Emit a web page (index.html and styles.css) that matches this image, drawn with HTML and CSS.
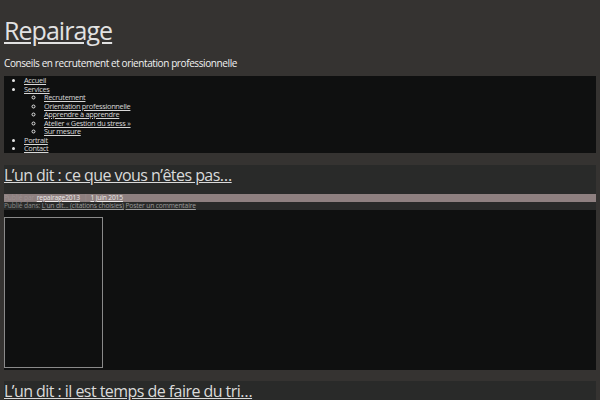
FILE: index.html
```html
<!DOCTYPE html>
<html lang="fr">
<head>
<meta charset="utf-8">
<title>Repairage</title>
<link rel="stylesheet" href="styles.css">
</head>
<body>
<div class="page">
  <header class="site-header">
    <h1 class="site-title"><a href="#">Repairage</a></h1>
    <p class="site-desc">Conseils en recrutement et orientation professionnelle</p>
  </header>
  <nav class="menu">
    <ul>
      <li><a href="#">Accueil</a></li>
      <li><a href="#">Services</a>
        <ul>
          <li><a href="#">Recrutement</a></li>
          <li><a href="#">Orientation professionnelle</a></li>
          <li><a href="#">Apprendre à apprendre</a></li>
          <li><a href="#">Atelier « Gestion du stress »</a></li>
          <li><a href="#">Sur mesure</a></li>
        </ul>
      </li>
      <li><a href="#">Portrait</a></li>
      <li><a href="#">Contact</a></li>
    </ul>
  </nav>
  <article class="post">
    <div class="post-head">
      <h2 class="post-title"><a href="#">L’un dit : ce que vous n’êtes pas…</a></h2>
      <div class="post-meta">Publié par <a href="#">repairage2013</a><span class="sep">|</span><a href="#">1 juin 2015</a></div>
      <div class="post-cats">Publié dans: <a href="#">L'un dit... (citations choisies)</a> <a href="#">Poster un commentaire</a></div>
    </div>
    <div class="post-body">
      <div class="pic"></div>
    </div>
  </article>
  <article class="post">
    <div class="post-head">
      <h2 class="post-title"><a href="#">L’un dit : il est temps de faire du tri…</a></h2>
    </div>
  </article>
</div>
</body>
</html>
```
FILE: styles.css
```css
html, body {
  margin: 0;
  padding: 0;
  background: #353331;
  overflow: hidden;
}
body {
  font-family: "Open Sans", "DejaVu Sans", sans-serif;
  color: #e6e6e6;
}
.page {
  width: 592px;
  padding: 0 4px;
}
a {
  color: inherit;
}
.site-header {
  height: 76px;
}
.site-title {
  margin: 0;
  padding-top: 14px;
  font-size: 25px;
  font-weight: normal;
  line-height: 32px;
  letter-spacing: -0.95px;
}
.site-title a {
  color: #e2e2e2;
}
.site-desc {
  margin: 11px 0 0;
  font-size: 10px;
  line-height: 12px;
  color: #f2f2f2;
  letter-spacing: -0.4px;
}
.menu {
  background: #0f1010;
  height: 77px;
  font-size: 7.4px;
  line-height: 8.5px;
  letter-spacing: -0.3px;
}
.menu a {
  color: #d8d8d8;
}
.menu ul {
  margin: 0;
  padding: 0 0 0 20px;
  list-style: disc;
}
.menu ul ul {
  list-style: circle;
}
.post {
  margin-top: 12px;
}
.post + .post {
  margin-top: 11px;
}
.post-head {
  background: #292a29;
}
.post-title {
  margin: 0;
  height: 29px;
  font-size: 16px;
  font-weight: normal;
  line-height: 21px;
  letter-spacing: -0.55px;
}
.post-title a {
  color: #dadada;
}
.post-meta {
  background: #8e8080;
  height: 8px;
  font-size: 6.7px;
  line-height: 8px;
  color: #9c9191;
  letter-spacing: -0.15px;
  overflow: hidden;
}
.post-meta a {
  color: #ece8e8;
  margin-left: 1px;
}
.post-meta .sep {
  color: #9c9191;
  margin: 0 2px 0 4px;
}
.post-cats {
  height: 8px;
  font-size: 6.7px;
  line-height: 8px;
  color: #8a8a8a;
  letter-spacing: -0.15px;
  overflow: hidden;
}
.post-cats a {
  color: #9c9c9c;
}
.post-body {
  background: #0f1010;
  padding: 7px 0 2px;
}
.pic {
  box-sizing: border-box;
  width: 99px;
  height: 151px;
  border: 1px solid #8a8a8a;
  background: #0f1010;
}
```
